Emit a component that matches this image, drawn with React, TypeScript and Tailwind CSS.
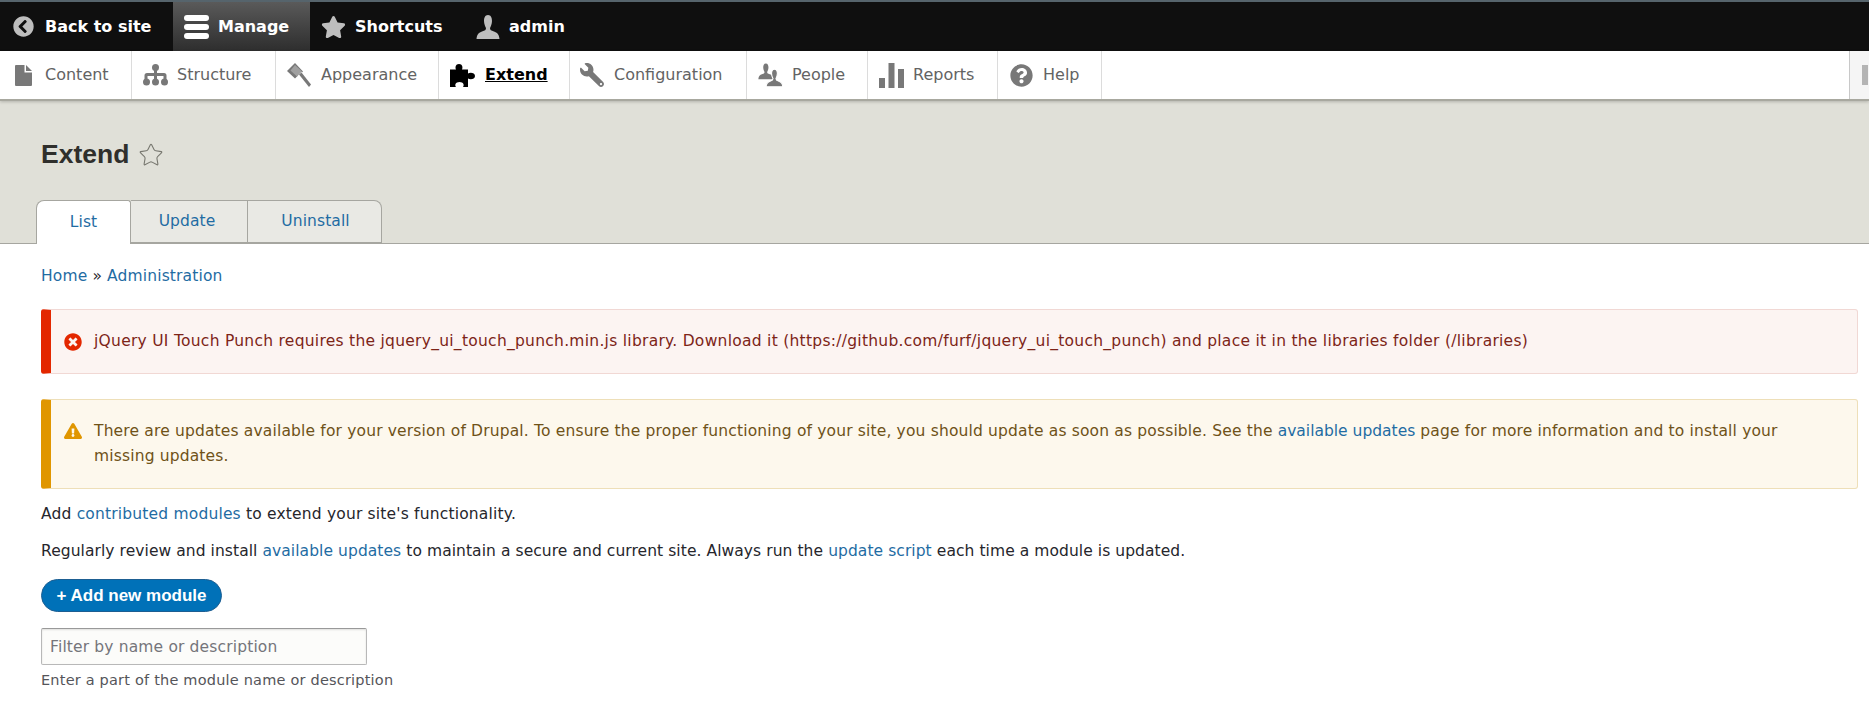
import { FaChevronCircleLeft, FaStar, FaWrench, FaQuestionCircle, FaTimesCircle, FaExclamationTriangle } from "react-icons/fa";
import { Star } from "lucide-react";

const personPath =
  "M12 0C9 0 8 3 8 6c0 3 1.500 6 2 7 0 2-1 2.500-4 3.500-3 1-5 2.500-5.500 7.500h23c-.5-5-2.500-6.500-5.500-7.500-3-1-4-1.500-4-3.500.5-1 2-4 2-7 0-3-1-6-4-6z";

function ContentIcon() {
  return (
    <svg viewBox="0 0 17 21" className="w-[17px] h-[21px]" fill="#787878">
      <path d="M1 0h8.500v7.500H17V20a1 1 0 0 1-1 1H1a1 1 0 0 1-1-1V1a1 1 0 0 1 1-1z" />
      <path d="M11 0l6 6h-6z" />
    </svg>
  );
}
function StructureIcon() {
  return (
    <svg viewBox="0 0 25 22" className="w-[25px] h-[22px]" fill="#787878">
      <circle cx="12.500" cy="3.500" r="3.500" />
      <circle cx="3.500" cy="18" r="3.500" />
      <circle cx="12.500" cy="18" r="3.500" />
      <circle cx="21.500" cy="18" r="3.500" />
      <path d="M11 5h3v4h7a2.500 2.500 0 0 1 2.500 2.500V16h-3v-4H14v4h-3v-4H4.500v4h-3v-4.500A2.500 2.500 0 0 1 4 9h7z" />
    </svg>
  );
}
function AppearanceIcon() {
  return (
    <svg viewBox="0 0 24 24" className="w-[24px] h-[24px]" fill="#787878">
      <path d="M8 0L0 8l8 7.500 3-3L5.500 7.500 9 4l6 5.500 1-1z" />
      <path d="M8 2l7 6.500-5 5-6.500-6z" fill="#a0a0a0" />
      <path d="M12 11.500l2.500-2 9.500 12-2 2.500z" />
    </svg>
  );
}
function PuzzleIcon() {
  return (
    <svg viewBox="0 0 25 23" className="w-[25px] h-[23px]" fill="#000000">
      <path d="M0 5.500h6C5 3.500 5.500 0 9 0s4 3.500 3 5.500h6V9.500c2-1.500 7-1 7 2.500s-5 4-7 2.500V23h-5c1.500-2 .5-5-3.500-5s-5 3-3.500 5H0z" />
    </svg>
  );
}
function PersonIcon() {
  return (
    <svg viewBox="0 0 24 24" className="w-[24px] h-[24px]" fill="#bebebe">
      <path d={personPath} />
    </svg>
  );
}
function PeopleIcon() {
  return (
    <svg viewBox="0 0 26 24" className="w-[25px] h-[24px]" fill="#787878">
      <g transform="scale(.68)">
        <path d={personPath} />
      </g>
      <g transform="translate(8 6) scale(.76)">
        <path d={personPath} stroke="#ffffff" strokeWidth="1.500" />
      </g>
    </svg>
  );
}
function BarsIcon() {
  return (
    <svg viewBox="0 0 25 25" className="w-[25px] h-[25px]" fill="#787878">
      <rect x="0" y="15" width="6" height="10" />
      <rect x="9.500" y="0" width="6" height="25" />
      <rect x="19" y="6" width="6" height="19" />
    </svg>
  );
}
function Burger() {
  return (
    <div className="flex flex-col justify-between w-[25px] h-[24px]">
      <span className="block h-[6px] rounded-[3px] bg-white" />
      <span className="block h-[6px] rounded-[3px] bg-white" />
      <span className="block h-[6px] rounded-[3px] bg-white" />
    </div>
  );
}

const navItems = [
  { label: "Content", w: "w-[132px]", pl: "pl-[15px]", gap: "gap-[13px]", icon: <ContentIcon /> },
  { label: "Structure", w: "w-[144px]", pl: "pl-[11px]", gap: "gap-[9px]", icon: <StructureIcon /> },
  { label: "Appearance", w: "w-[163px]", pl: "pl-[11px]", gap: "gap-[10px]", icon: <AppearanceIcon /> },
  { label: "Extend", w: "w-[131px]", pl: "pl-[11px]", gap: "gap-[10px]", icon: <PuzzleIcon />, active: true },
  { label: "Configuration", w: "w-[177px]", pl: "pl-[10px]", gap: "gap-[10px]", icon: <FaWrench className="w-[24px] h-[24px] -scale-x-100 text-[#787878]" /> },
  { label: "People", w: "w-[121px]", pl: "pl-[11px]", gap: "gap-[9px]", icon: <PeopleIcon /> },
  { label: "Reports", w: "w-[130px]", pl: "pl-[11px]", gap: "gap-[9px]", icon: <BarsIcon /> },
  { label: "Help", w: "w-[104px]", pl: "pl-[12px]", gap: "gap-[10px]", icon: <FaQuestionCircle className="w-[23px] h-[23px] text-[#787878]" /> },
];

function A({ children }: { children: React.ReactNode }) {
  return <a className="text-[#1f6ca3]">{children}</a>;
}

export default function App() {
  return (
    <div className="min-h-[719px] bg-white text-[15.5px] text-[#26262c] font-['DejaVu_Sans','Liberation_Sans',sans-serif]">
      <div className="flex h-[51px] bg-[#0f0f0f] border-t-2 border-[#56646c] text-white font-bold text-[16px]">
        <div className="flex w-[173px] items-center gap-[11px] pl-[13px]">
          <FaChevronCircleLeft className="w-[21px] h-[21px] text-[#bebebe]" />
          <span>Back to site</span>
        </div>
        <div className="flex w-[137px] items-center gap-[9px] pl-[11px] bg-gradient-to-b from-[#5a5a5a] to-[#2e2e2e]">
          <Burger />
          <span>Manage</span>
        </div>
        <div className="flex w-[154px] items-center gap-[9px] pl-[11px]">
          <FaStar className="w-[25px] h-[24px] text-[#bebebe]" />
          <span>Shortcuts</span>
        </div>
        <div className="flex items-center gap-[9px] pl-[12px]">
          <PersonIcon />
          <span>admin</span>
        </div>
      </div>

      <nav className="relative z-10 flex h-[50px] bg-white border-b-2 border-[#a8a89f] shadow-[0_1px_3px_rgba(0,0,0,0.2)] text-[#636363] text-[16px]">
        {navItems.map((it) => (
          <div key={it.label} className={`${it.w} ${it.pl} ${it.gap} flex items-center border-r border-[#dcdcdc]`}>
            {it.icon}
            <span className={it.active ? "font-bold text-black underline" : ""}>{it.label}</span>
          </div>
        ))}
        <div className="ml-auto flex w-[20px] items-center border-l border-[#c8c8c8] bg-[#f5f5f5]">
          <span className="ml-[12px] block w-[6px] h-[20px] bg-[#b4b4b4]" />
        </div>
      </nav>

      <header className="h-[143px] bg-[#e0e0d8] border-b border-[#a6a6a0] flex flex-col justify-between">
        <div className="flex items-center gap-[9px] pl-[41px] pt-[40px]">
          <h1 className="text-[26.5px] leading-[27px] font-bold text-[#2f2f2c] font-['Liberation_Sans','DejaVu_Sans',sans-serif]">Extend</h1>
          <Star className="w-[26px] h-[26px] text-[#77776f]" strokeWidth={1} />
        </div>
        <div className="flex pl-[36px] -mb-px text-[#1f6ca3] tracking-[0.1px]">
          <div className="w-[95px] h-[44px] flex items-center justify-center bg-white border border-b-0 border-[#a6a6a0] rounded-tl-[8px] rounded-tr-[3px]">List</div>
          <div className="w-[117px] h-[43px] flex items-center justify-center pr-[4px] bg-[#e9e9e4] border-t border-r border-b border-[#a6a6a0]">Update</div>
          <div className="w-[134px] h-[43px] flex items-center justify-center pl-[2px] bg-[#e9e9e4] border-t border-r border-b border-[#a6a6a0] rounded-tr-[8px]">Uninstall</div>
        </div>
      </header>

      <main className="pl-[41px] pr-[11px]">
        <div className="pt-[20px] leading-[24px] tracking-[0.14px]">
          <A>Home</A> » <A>Administration</A>
        </div>

        <div className="mt-[21px] flex h-[65px] items-center gap-[12px] pl-[13px] bg-[#fcf4f2] border border-[#f1d8d4] border-l-[10px] border-l-[#e32700] rounded-[3px] text-[#7d2418] tracking-[0.27px]">
          <FaTimesCircle className="w-[18px] h-[18px] text-[#e32700] shrink-0" />
          <span>jQuery UI Touch Punch requires the jquery_ui_touch_punch.min.js library. Download it (https://github.com/furf/jquery_ui_touch_punch) and place it in the libraries folder (/libraries)</span>
        </div>

        <div className="mt-[25px] flex h-[90px] items-center gap-[12px] pl-[13px] pr-[40px] bg-[#fdf8ed] border border-[#eedfb8] border-l-[10px] border-l-[#e09600] rounded-[3px] text-[#6f5218] leading-[25.5px] tracking-[0.16px]">
          <FaExclamationTriangle className="w-[18px] h-[18px] text-[#e09600] shrink-0 -mt-[26px]" />
          <span>
            There are updates available for your version of Drupal. To ensure the proper functioning of your site, you should update as soon as possible. See the <span className="tracking-normal"><A>available updates</A></span> page for more information and to install your missing updates.
          </span>
        </div>

        <p className="mt-[13px] leading-[24px] tracking-[0.18px]">
          Add <A>contributed modules</A> to extend your site's functionality.
        </p>
        <p className="mt-[13px] leading-[24px] tracking-[0.07px]">
          Regularly review and install <A>available updates</A> to maintain a secure and current site. Always run the <A>update script</A> each time a module is updated.
        </p>

        <button className="mt-[16px] block w-[181px] h-[33px] rounded-[17px] bg-[#0071b8] border border-[#1d5e92] text-white font-bold text-[17px] leading-[20px] font-['Liberation_Sans',sans-serif]">
          + Add new module
        </button>

        <input
          placeholder="Filter by name or description"
          className="mt-[16px] block w-[326px] h-[37px] px-[8px] bg-[#fcfcfa] border border-[#b8b8b8] border-t-[#999999] rounded-[2px] shadow-[inset_0_1px_2px_rgba(0,0,0,0.12)] placeholder:text-[#75757a] outline-none tracking-[0.15px]"
        />
        <div className="mt-[3px] text-[14.5px] leading-[24px] text-[#55555a] tracking-[0.2px]">Enter a part of the module name or description</div>
      </main>
    </div>
  );
}
